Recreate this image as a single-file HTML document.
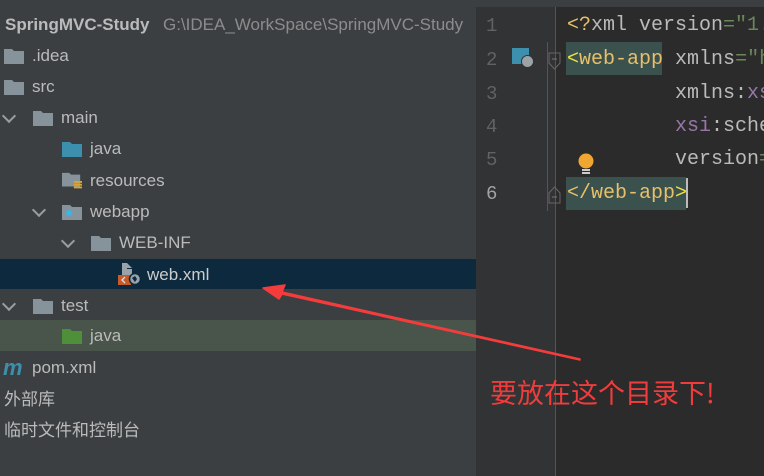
<!DOCTYPE html>
<html><head><meta charset="utf-8"><style>
body{margin:0;width:764px;height:476px;overflow:hidden;background:#2b2b2b;position:relative;font-family:"Liberation Sans","Noto Sans CJK SC",sans-serif;}
#left{position:absolute;left:0;top:0;width:476px;height:476px;background:#3c3f41;overflow:hidden;}
#gut{position:absolute;left:476px;top:0;width:80px;height:476px;background:#313335;}
#vl{position:absolute;left:555px;top:0;width:1px;height:476px;background:#555;}
#ed{position:absolute;left:0;top:0;width:764px;height:476px;overflow:hidden;}
.row{position:absolute;left:0;width:476px;height:31px;color:#bbbbbb;font-size:17px;line-height:31px;white-space:nowrap;overflow:hidden;}
.row span{position:absolute;top:0;}
.fd{position:absolute;width:20px;height:15px;top:9px;}
.chev{position:absolute;top:9px;width:8px;height:8px;border-right:2px solid #9a9da0;border-bottom:2px solid #9a9da0;transform:rotate(45deg);}
.ln{position:absolute;left:486px;width:20px;color:#606366;font-family:"Liberation Mono",monospace;font-size:19px;}
.code{position:absolute;left:567px;width:197px;overflow:hidden;font-family:"Liberation Mono","DejaVu Sans Mono",monospace;font-size:20px;color:#a9b7c6;white-space:pre;}
.t{color:#e8bf6a}.a{color:#bababa}.s{color:#6a8759}.n{color:#9876aa}
</style></head><body>
<div id="left">
<div class="row" style="top:9px"><span style="left:5px;font-weight:bold;color:#bbb">SpringMVC-Study</span><span style="left:163px;color:#8c8c8c">G:\IDEA_WorkSpace\SpringMVC-Study</span></div>
<div class="row" style="top:40px"><svg class="fd" style="left:4px" viewBox="0 0 20 15"><path d="M0 0h8l2 2h10v13H0z" fill="#87939a"/></svg><span style="left:32px">.idea</span></div>
<div class="row" style="top:71px"><svg class="fd" style="left:4px" viewBox="0 0 20 15"><path d="M0 0h8l2 2h10v13H0z" fill="#87939a"/></svg><span style="left:32px">src</span></div>
<div class="row" style="top:102px"><div class="chev" style="left:4px"></div><svg class="fd" style="left:33px" viewBox="0 0 20 15"><path d="M0 0h8l2 2h10v13H0z" fill="#87939a"/></svg><span style="left:61px">main</span></div>
<div class="row" style="top:133px"><svg class="fd" style="left:62px" viewBox="0 0 20 15"><path d="M0 0h8l2 2h10v13H0z" fill="#3d8fae"/></svg><span style="left:90px">java</span></div>
<div class="row" style="top:165px"><svg class="fd" style="left:62px;height:19px;top:7px" viewBox="0 0 22 19"><path d="M0 0h8l2 2h10v13H0z" fill="#87939a"/><path d="M13 9h9v2h-9zM13 12h9v2h-9zM13 15h9v2h-9z" fill="#d7a435"/></svg><span style="left:90px">resources</span></div>
<div class="row" style="top:196px"><div class="chev" style="left:34px"></div><svg class="fd" style="left:62px" viewBox="0 0 20 15"><path d="M0 0h8l2 2h10v13H0z" fill="#87939a"/><circle cx="7" cy="8" r="3" fill="#38b6e8"/></svg><span style="left:90px">webapp</span></div>
<div class="row" style="top:227px"><div class="chev" style="left:63px"></div><svg class="fd" style="left:91px" viewBox="0 0 20 15"><path d="M0 0h8l2 2h10v13H0z" fill="#87939a"/></svg><span style="left:119px">WEB-INF</span></div>
<div class="row" style="top:259px;height:30px;background:#0d293e"><svg style="position:absolute;left:118px;top:4px" width="24" height="22" viewBox="0 0 24 22"><path d="M4 0h5v6H4zM4 6h10V12H4z" fill="#9aa3a8"/><path d="M9 0l5 5h-5z" fill="#9aa3a8"/><rect x="0" y="12" width="13" height="10" fill="#c55a2a"/><path d="M7 14l-3 3 3 3" stroke="#ddd" fill="none" stroke-width="1.4"/><circle cx="17" cy="16" r="5.5" fill="#9aa3a8" stroke="#0d293e" stroke-width="1.5"/><path d="M14 15l3-2 2 3-2 3z" fill="#0d293e"/></svg><span style="left:147px;color:#ccc">web.xml</span></div>
<div class="row" style="top:290px"><div class="chev" style="left:4px"></div><svg class="fd" style="left:33px" viewBox="0 0 20 15"><path d="M0 0h8l2 2h10v13H0z" fill="#87939a"/></svg><span style="left:61px">test</span></div>
<div class="row" style="top:320px;background:#49544a"><svg class="fd" style="left:62px" viewBox="0 0 20 15"><path d="M0 0h8l2 2h10v13H0z" fill="#4f8f3a"/></svg><span style="left:90px">java</span></div>
<div class="row" style="top:352px"><span style="left:3px;color:#3d8fae;font-weight:bold;font-style:italic;font-size:22px">m</span><span style="left:32px">pom.xml</span></div>
<div class="row" style="top:384px"><span style="left:4px">外部库</span></div>
<div class="row" style="top:415px"><span style="left:4px">临时文件和控制台</span></div>
</div>
<div id="gut"></div>
<div id="vl"></div>
<div style="position:absolute;left:476px;top:0;width:288px;height:7px;background:#3c3f41"></div>
<div style="position:absolute;left:547px;top:42px;width:1px;height:169px;background:#4a5a5a"></div>
<div class="ln" style="top:15px">1</div><div class="ln" style="top:49px">2</div><div class="ln" style="top:83px">3</div><div class="ln" style="top:116px">4</div><div class="ln" style="top:149px">5</div><div class="ln" style="top:183px;color:#a4a3a3">6</div>
<div style="position:absolute;left:512px;top:48px;width:17px;height:16px;background:#3d8fae"></div>
<div style="position:absolute;left:521px;top:55px;width:11px;height:11px;border-radius:50%;background:#9aa3a8;border:1px solid #313335"></div>
<svg style="position:absolute;left:548px;top:52px" width="14" height="20"><path d="M1 1h11v10l-5.5 6L1 11z" fill="none" stroke="#666"/><path d="M4 7h5" stroke="#777"/></svg>
<svg style="position:absolute;left:548px;top:185px" width="14" height="20"><path d="M1 18h11V8L6.5 2 1 8z" fill="none" stroke="#666"/><path d="M4 12h5" stroke="#777"/></svg>
<svg style="position:absolute;left:577px;top:153px" width="18" height="24"><circle cx="9" cy="8" r="7.5" fill="#f0a732"/><rect x="5" y="16" width="8" height="2" fill="#ccc"/><rect x="5" y="19" width="8" height="2" fill="#ccc"/></svg>
<div style="position:absolute;left:566px;top:42px;width:96px;height:33px;background:#3b514d"></div>
<div style="position:absolute;left:566px;top:177px;width:120px;height:33px;background:#3b514d"></div>
<div style="position:absolute;left:686px;top:178px;width:2px;height:30px;background:#bbb"></div>
<div id="ed">
<div class="code" style="top:14px"><span class="t">&lt;?</span><span class="a">xml version</span><span class="s">="1.0"</span></div>
<div class="code" style="top:48px"><span style="color:#f0e040">&lt;</span><span class="t">web-app</span> <span class="a">xmlns</span><span class="s">="h</span></div>
<div class="code" style="top:82px">         <span class="a">xmlns:</span><span class="n">xsi</span></div>
<div class="code" style="top:115px">         <span class="n">xsi</span><span class="a">:schemaL</span></div>
<div class="code" style="top:148px">         <span class="a">version</span><span class="s">=</span></div>
<div class="code" style="top:182px"><span class="t">&lt;/web-app</span><span style="color:#f0e040">&gt;</span></div>
</div>
<svg style="position:absolute;left:0;top:0" width="764" height="476"><path d="M580 359L282 292L285 285L263 288L279 299L282 294L580 360Z" fill="#f53c3c" stroke="#f53c3c" stroke-width="1.5" stroke-linejoin="round"/></svg>
<div style="position:absolute;left:490px;top:373px;color:#f03c3c;font-size:27px;font-family:'Noto Sans CJK SC',sans-serif;line-height:38px;white-space:nowrap">要放在这个目录下!</div>
</body></html>
